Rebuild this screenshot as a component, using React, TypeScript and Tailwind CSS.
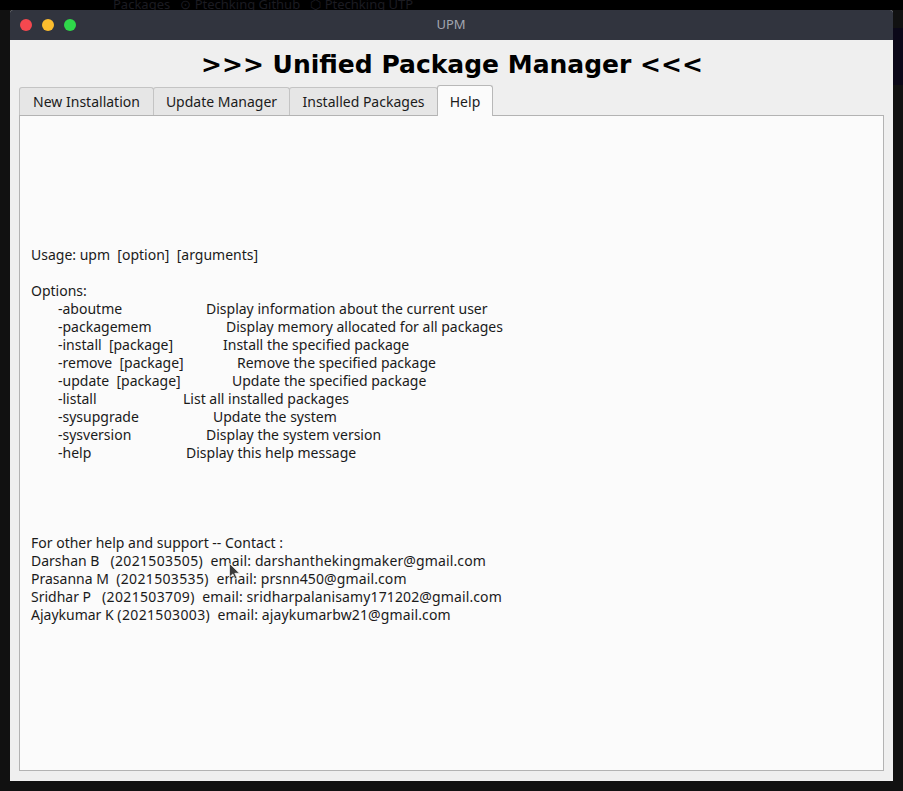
import React from 'react';

const options = [
  { flag: '-aboutme', desc: 'Display information about the current user', w: 'w-[148px]' },
  { flag: '-packagemem', desc: 'Display memory allocated for all packages', w: 'w-[168px]' },
  { flag: '-install  [package]', desc: 'Install the specified package', w: 'w-[165px]' },
  { flag: '-remove  [package]', desc: 'Remove the specified package', w: 'w-[179px]' },
  { flag: '-update  [package]', desc: 'Update the specified package', w: 'w-[174px]' },
  { flag: '-listall', desc: 'List all installed packages', w: 'w-[125px]' },
  { flag: '-sysupgrade', desc: 'Update the system', w: 'w-[155px]' },
  { flag: '-sysversion', desc: 'Display the system version', w: 'w-[148px]' },
  { flag: '-help', desc: 'Display this help message', w: 'w-[128px]' },
];

const contacts = [
  { name: 'Darshan B   ', id: '(2021503505)', email: '  email: darshanthekingmaker@gmail.com' },
  { name: 'Prasanna M  ', id: '(2021503535)', email: '  email: prsnn450@gmail.com' },
  { name: 'Sridhar P   ', id: '(2021503709)', email: '  email: sridharpalanisamy171202@gmail.com' },
  { name: 'Ajaykumar K ', id: '(2021503003)', email: '  email: ajaykumarbw21@gmail.com' },
];

const tabs = ['New Installation', 'Update Manager', 'Installed Packages'];
const tabWidths = ['w-[135px]', 'w-[137px]', 'w-[149px]'];

export default function App() {
  return (
    <div className="relative w-[903px] h-[791px] bg-[#111111] overflow-hidden font-['Noto_Sans',sans-serif]">
      {/* blurred desktop behind the window */}
      <div className="absolute left-0 top-0 w-full h-[10px] bg-black" />
      <div className="absolute left-[113px] top-[-5px] text-[13px] text-[#1c1c22] whitespace-pre">
        {'Packages   ⊙ Ptechking Github   ⬡ Ptechking UTP'}
      </div>
      <div className="absolute right-0 top-[28px] w-[10px] h-[57px] bg-[#0b0818]" />

      <div className="absolute left-[10px] top-[10px] w-[883px] h-[771px] flex flex-col bg-[#efefef] rounded-t-[3px] overflow-hidden">
        {/* title bar */}
        <div className="relative h-[30px] shrink-0 bg-[#31343e] flex items-center">
          <div className="flex gap-[10px] pl-[10px]">
            <span className="w-[12px] h-[12px] rounded-full bg-[#f5484f]" />
            <span className="w-[12px] h-[12px] rounded-full bg-[#fcbd2e]" />
            <span className="w-[12px] h-[12px] rounded-full bg-[#2fd84a]" />
          </div>
          <div className="absolute left-[441px] -translate-x-1/2 text-[13px] text-[#a2a6b0]">UPM</div>
        </div>

        {/* heading */}
        <div className="h-[40px] shrink-0 flex items-end justify-center pl-[1px]">
          <h1 className="font-['DejaVu_Sans',sans-serif] font-bold text-[25px] leading-[30px] text-black whitespace-pre">
            {'>>> Unified Package Manager <<<'}
          </h1>
        </div>

        {/* tabs */}
        <div className="mt-[5px] px-[9px] flex items-end h-[30px] shrink-0">
          {tabs.map((t, i) => (
            <div
              key={t}
              className={`${tabWidths[i]} h-[28px] -mr-[1px] flex items-center justify-center border border-b-0 border-[#c4c4c4] rounded-t-[3px] bg-[#e6e6e6] text-[14px] text-[#1b1b1b]`}
            >
              {t}
            </div>
          ))}
          <div className="relative z-10 w-[56px] h-[31px] -mb-[1px] flex items-center justify-center border border-b-0 border-[#b8b8b8] rounded-t-[3px] bg-[#fbfbfb] text-[14px] text-[#1b1b1b]">
            Help
          </div>
        </div>

        {/* panel */}
        <div className="mx-[9px] mb-[10px] flex-1 border border-[#b3b3b3] bg-[#fbfbfb] pt-[130px] pl-[11px] text-[14px] leading-[18px] text-[#1a1a1a]">
          <div className="whitespace-pre">{'Usage: upm  [option]  [arguments]'}</div>
          <div className="h-[18px]" />
          <div>Options:</div>
          {options.map((o) => (
            <div key={o.flag} className="flex pl-[27px] whitespace-pre">
              <span className={`${o.w} shrink-0`}>{o.flag}</span>
              <span>{o.desc}</span>
            </div>
          ))}
          <div className="h-[72px]" />
          <div>For other help and support -- Contact :</div>
          {contacts.map((c) => (
            <div key={c.id} className="whitespace-pre">
              {c.name}
              <span className="tracking-[0.35px]">{c.id}</span>
              <span className="tracking-[0.12px]">{c.email}</span>
            </div>
          ))}
        </div>
      </div>

      {/* mouse pointer */}
      <svg className="absolute left-[229px] top-[563px]" width="12" height="17" viewBox="0 0 12 17">
        <path d="M0.5 0.5 L0.5 14 L3.8 11 L6 16 L8 15 L5.8 10.3 L10.5 10.3 Z" fill="#3a3a3a" stroke="#eeeeee" strokeWidth="0.8" />
      </svg>
    </div>
  );
}
